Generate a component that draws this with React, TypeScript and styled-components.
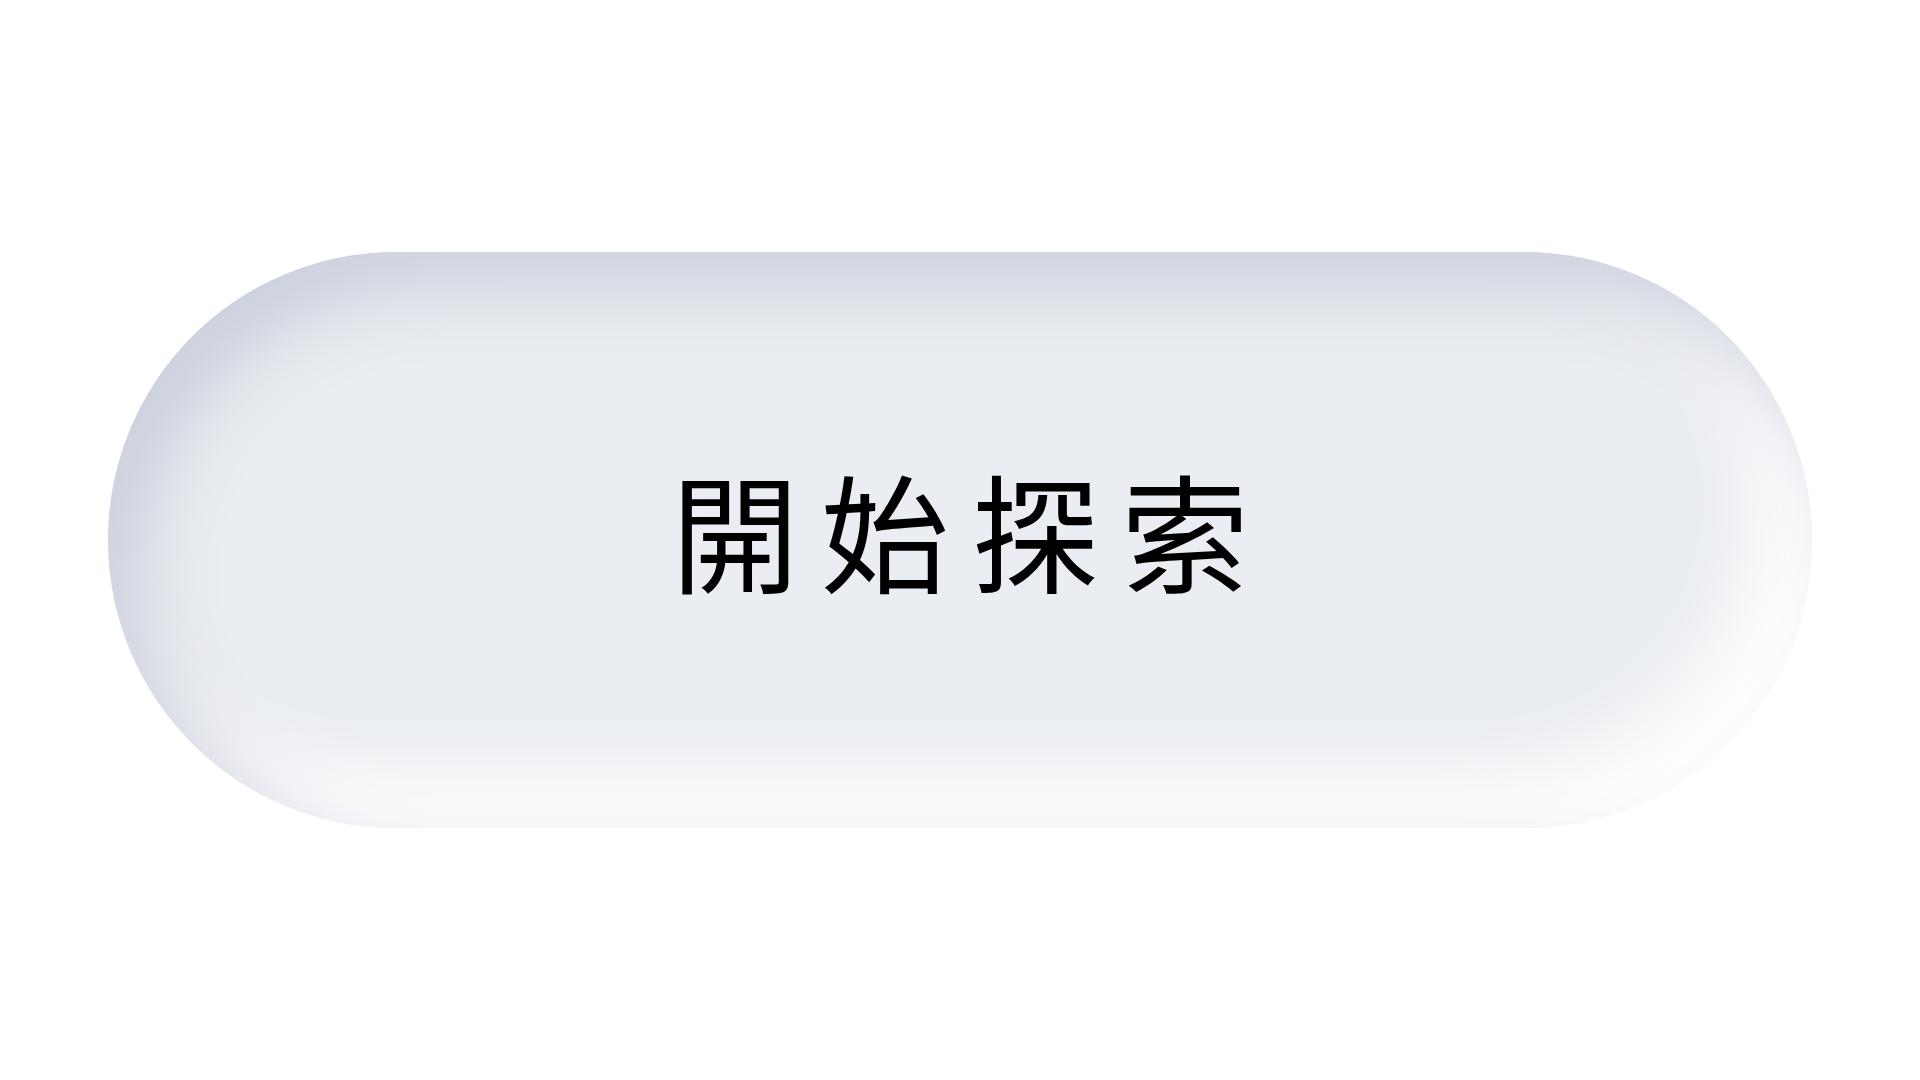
import React from "react";
import styled, { createGlobalStyle } from "styled-components";

const Global = createGlobalStyle`
  html, body { margin: 0; padding: 0; background: #ffffff; }
  #root { width: 100vw; height: 100vh; }
`;

const Page = styled.div`
  width: 100%;
  height: 100%;
  display: flex;
  align-items: center;
  justify-content: center;
  background: #ffffff;
`;

const PillButton = styled.button`
  width: 1704px;
  height: 576px;
  border: none;
  border-radius: 288px;
  background: #eaedf1;
  box-shadow: inset 36px 36px 72px #ccd0dd, inset -40px -40px 80px 10px #ffffff;
  display: flex;
  align-items: center;
  justify-content: center;
  padding: 0 0 24px 22px;
  cursor: pointer;
  font-family: "Noto Sans CJK TC", "Noto Sans CJK SC", sans-serif;
  font-size: 128px;
  font-weight: 400;
  letter-spacing: 22px;
  color: #000000;
`;

export default function App() {
  return (
    <>
      <Global />
      <Page>
        <PillButton>開始探索</PillButton>
      </Page>
    </>
  );
}
